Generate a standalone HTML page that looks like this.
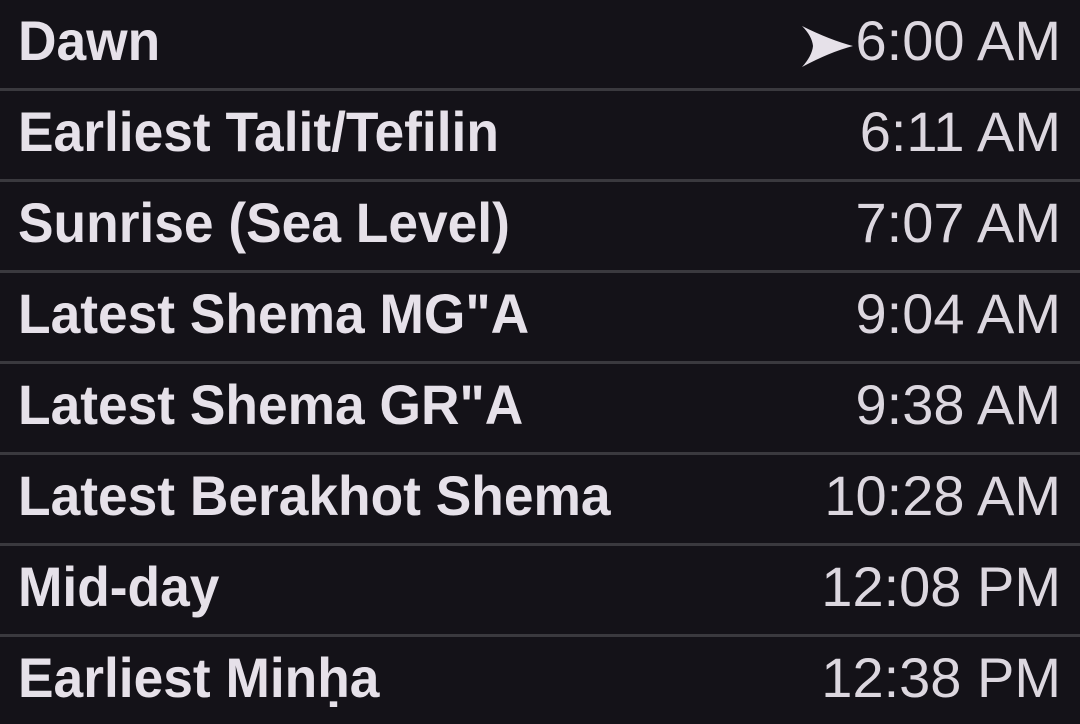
<!DOCTYPE html>
<html><head><meta charset="utf-8"><style>
html,body{margin:0;padding:0;background:#141218;width:1080px;height:724px;overflow:hidden}
.row{position:relative;height:88px;border-bottom:3px solid #3a393e;color:#e6e1e9;font-family:"Liberation Sans",sans-serif;font-size:56px;line-height:88px}
.l{position:absolute;left:18px;top:-3px;font-weight:bold;white-space:nowrap;transform:scaleX(0.952);transform-origin:0 0}
.r{position:absolute;right:19px;top:-3px;white-space:nowrap;color:#dcd7df}
svg{position:absolute;left:0;top:0}
</style></head><body>
<div class="row"><span class="l">Dawn</span><span class="r">6:00 AM</span>
<svg width="1080" height="88"><path d="M802 26 Q830 40 853 46 Q830 52 802 67 Q812 56 813 46 Q812 36 802 26Z" fill="#e6e1e9"/></svg></div>
<div class="row"><span class="l">Earliest Talit/Tefilin</span><span class="r">6:11 AM</span></div>
<div class="row"><span class="l">Sunrise (Sea Level)</span><span class="r">7:07 AM</span></div>
<div class="row"><span class="l">Latest Shema MG"A</span><span class="r">9:04 AM</span></div>
<div class="row"><span class="l">Latest Shema GR"A</span><span class="r">9:38 AM</span></div>
<div class="row"><span class="l">Latest Berakhot Shema</span><span class="r">10:28 AM</span></div>
<div class="row"><span class="l">Mid-day</span><span class="r">12:08 PM</span></div>
<div class="row" style="border-bottom:none"><span class="l">Earliest Minḥa</span><span class="r">12:38 PM</span></div>
</body></html>
